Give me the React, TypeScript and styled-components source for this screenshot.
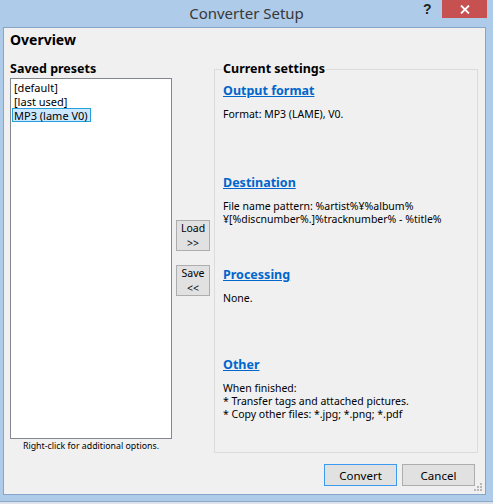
import React from "react";
import styled, { createGlobalStyle } from "styled-components";

const Global = createGlobalStyle`
  html, body { margin: 0; padding: 0; }
  body { background: #aecbe9; font-family: "Segoe UI", "Noto Sans", sans-serif; }
  * { box-sizing: border-box; }
`;

const Frame = styled.div`
  width: 493px;
  height: 504px;
  background: #aecbe9;
  display: flex;
  flex-direction: column;
  overflow: hidden;
`;

const TitleBar = styled.div`
  height: 27px;
  display: flex;
  align-items: flex-start;
  position: relative;
`;

const Title = styled.div`
  flex: 1;
  text-align: center;
  font-family: "Noto Sans", sans-serif;
  font-size: 15px;
  line-height: 27px;
  color: #383838;
`;

const Help = styled.div`
  position: absolute;
  left: 423px;
  top: 0;
  width: 12px;
  height: 18px;
  font-family: "Liberation Sans", sans-serif;
  font-weight: bold;
  font-size: 14px;
  line-height: 18px;
  color: #222;
`;

const CloseBtn = styled.div`
  position: absolute;
  left: 442px;
  top: 0;
  width: 45px;
  height: 18px;
  background: #c75050;
  display: flex;
  align-items: center;
  justify-content: center;
`;

const Client = styled.div`
  margin: 0 7px 0 3px;
  height: 468px;
  border: 1px solid #86a6c9;
  background: #f0f0f0;
  display: flex;
  flex-direction: column;
  padding: 3px 5px 0 6px;
  position: relative;
`;

const Overview = styled.div`
  font-family: "Noto Sans", sans-serif;
  font-weight: bold;
  font-size: 14px;
  line-height: 18px;
  color: #000;
  height: 30px;
`;

const Body = styled.div`
  display: grid;
  grid-template-columns: 162px 34px 264px;
  column-gap: 4px;
  height: 392px;
`;

const LeftCol = styled.div`
  display: flex;
  flex-direction: column;
`;

const Label = styled.div`
  font-family: "Noto Sans", sans-serif;
  font-weight: bold;
  font-size: 12.5px;
  line-height: 16px;
  height: 17px;
  color: #000;
`;

const ListBox = styled.div`
  height: 361px;
  background: #fff;
  border: 1px solid #828790;
  padding: 1px 1px;
  display: flex;
  flex-direction: column;
`;

const Item = styled.div<{ $selected?: boolean }>`
  font-family: "Noto Sans", sans-serif;
  font-size: 11px;
  line-height: 13px;
  height: 14px;
  padding: 0 2px 0 1px;
  color: #000;
  align-self: flex-start;
  background: ${(p) => (p.$selected ? "#cce8ff" : "transparent")};
  border: 1px solid ${(p) => (p.$selected ? "#26a0da" : "transparent")};
`;

const Caption = styled.div`
  font-family: "Noto Sans", sans-serif;
  font-size: 8.8px;
  line-height: 13px;
  text-align: center;
  color: #000;
  margin-top: 1px;
`;

const MidCol = styled.div`
  display: flex;
  flex-direction: column;
  justify-content: center;
  gap: 14px;
  padding-top: 2px;
`;

const SmallButton = styled.div`
  width: 34px;
  height: 31px;
  background: #e1e1e1;
  border: 1px solid #adadad;
  display: flex;
  align-items: center;
  justify-content: center;
  text-align: center;
  font-family: "Noto Sans", sans-serif;
  font-size: 10.5px;
  line-height: 14.5px;
  color: #000;
`;

const Group = styled.fieldset`
  margin: 0;
  padding: 6px 8px 0 8px;
  border: 1px solid #dcdcdc;
  min-width: 0;
  height: 392px;
`;

const Legend = styled.legend`
  font-family: "Noto Sans", sans-serif;
  font-weight: bold;
  font-size: 12.5px;
  line-height: 16px;
  padding: 0 1px;
  margin-left: -1px;
  color: #000;
`;

const Section = styled.div<{ $h: number }>`
  height: ${(p) => p.$h}px;
  display: flex;
  flex-direction: column;
`;

const Link = styled.a`
  font-family: "Noto Sans", sans-serif;
  font-weight: bold;
  font-size: 12.5px;
  line-height: 16px;
  color: #0066cc;
  text-decoration: underline;
  align-self: flex-start;
  margin-bottom: 9px;
`;

const Desc = styled.div`
  font-family: "Noto Sans", sans-serif;
  font-size: 10.5px;
  line-height: 13px;
  color: #000;
  white-space: pre;
`;

const Footer = styled.div`
  display: flex;
  justify-content: flex-end;
  gap: 5px;
  padding: 11px 5px 0 0;
`;

const DialogButton = styled.div<{ $default?: boolean }>`
  width: 73px;
  height: 22px;
  background: #e1e1e1;
  border: 1px solid ${(p) => (p.$default ? "#3c9af0" : "#adadad")};
  display: flex;
  align-items: center;
  justify-content: center;
  font-family: "Noto Sans", sans-serif;
  font-size: 11.5px;
  color: #000;
`;

const Grip = styled.svg`
  position: absolute;
  right: 2px;
  bottom: 2px;
`;

const BottomEdge = styled.div`
  margin-top: 6px;
  height: 1px;
  background: #8da9c8;
`;

const BottomFill = styled.div`
  flex: 1;
  background: #dde3ea;
`;

export default function App() {
  return (
    <>
      <Global />
      <Frame>
        <TitleBar>
          <Title>Converter Setup</Title>
          <Help>?</Help>
          <CloseBtn>
            <svg width="10" height="9" viewBox="0 0 10 9">
              <path d="M1 0.5 L9 8.5 M9 0.5 L1 8.5" stroke="#fff" strokeWidth="1.8" />
            </svg>
          </CloseBtn>
        </TitleBar>
        <Client>
          <Overview>Overview</Overview>
          <Body>
            <LeftCol>
              <Label>Saved presets</Label>
              <ListBox>
                <Item>[default]</Item>
                <Item>[last used]</Item>
                <Item $selected>MP3 (lame V0)</Item>
              </ListBox>
              <Caption>Right-click for additional options.</Caption>
            </LeftCol>
            <MidCol>
              <SmallButton>
                <span>
                  Load
                  <br />
                  &gt;&gt;
                </span>
              </SmallButton>
              <SmallButton>
                <span>
                  Save
                  <br />
                  &lt;&lt;
                </span>
              </SmallButton>
            </MidCol>
            <Group>
              <Legend>Current settings</Legend>
              <Section $h={92}>
                <Link>Output format</Link>
                <Desc>Format: MP3 (LAME), V0.</Desc>
              </Section>
              <Section $h={92}>
                <Link>Destination</Link>
                <Desc>{"File name pattern: %artist%\u00a5%album%\n\u00a5[%discnumber%.]%tracknumber% - %title%"}</Desc>
              </Section>
              <Section $h={90}>
                <Link>Processing</Link>
                <Desc>None.</Desc>
              </Section>
              <Section $h={90}>
                <Link>Other</Link>
                <Desc>{"When finished:\n* Transfer tags and attached pictures.\n* Copy other files: *.jpg; *.png; *.pdf"}</Desc>
              </Section>
            </Group>
          </Body>
          <Footer>
            <DialogButton $default>Convert</DialogButton>
            <DialogButton>Cancel</DialogButton>
          </Footer>
          <Grip width="9" height="9" viewBox="0 0 9 9">
            <rect x="6" y="0" width="2" height="2" fill="#b8b8b8" />
            <rect x="3" y="3" width="2" height="2" fill="#b8b8b8" />
            <rect x="6" y="3" width="2" height="2" fill="#b8b8b8" />
            <rect x="0" y="6" width="2" height="2" fill="#b8b8b8" />
            <rect x="3" y="6" width="2" height="2" fill="#b8b8b8" />
            <rect x="6" y="6" width="2" height="2" fill="#b8b8b8" />
          </Grip>
        </Client>
        <BottomEdge />
        <BottomFill />
      </Frame>
    </>
  );
}
